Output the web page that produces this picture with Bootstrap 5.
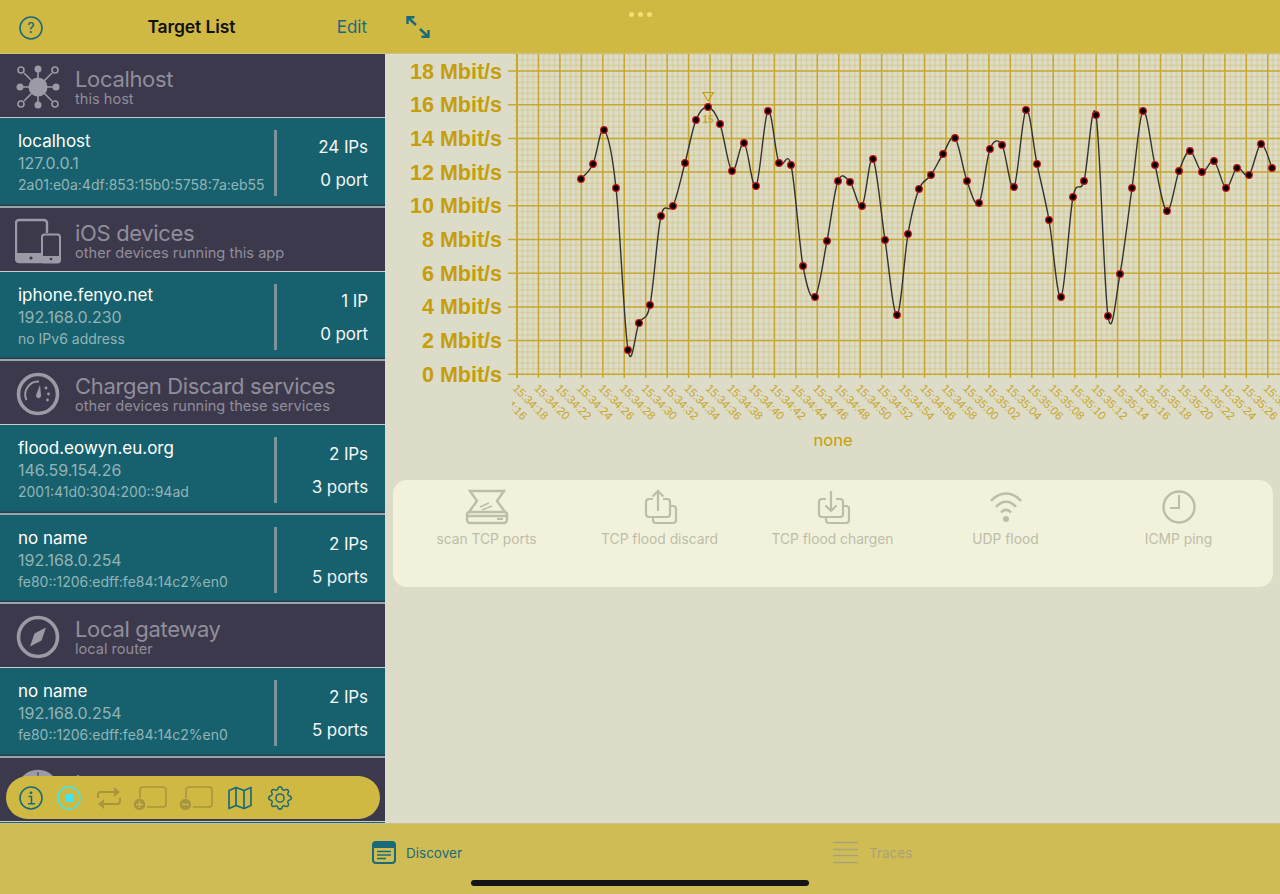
<!DOCTYPE html>
<html lang="en">
<head>
    <meta charset="UTF-8">
    <meta name="viewport" content="width=device-width, initial-scale=1.0">
    <title>Target List</title>
    <link rel="stylesheet" href="https://cdn.jsdelivr.net/npm/bootstrap@5.3.0/dist/css/bootstrap.min.css">
    <style>
        html, body { height: 894px; overflow: hidden; }
        body { font-family: Inter, "Liberation Sans", sans-serif; background: #dcdcc8; }
        svg { display: block; flex: none; }

        .bar-top { height: 54px; background: #cfb943; border-bottom: 1px solid #c9c08a; }
        .side-col { width: 385px; flex: none; }
        .main-col { width: 895px; flex: none; }
        .side-head { padding: 2px 18px 0 19px; }
        .side-title { font-size: 17.5px; font-weight: 600; color: #111; letter-spacing: -.1px; margin-left: 3px; }
        .edit-link { font-size: 17px; color: #1b6a7a; }
        .dots { top: 11.5px; left: 244px; }
        .dots span { width: 5px; height: 5px; border-radius: 50%; background: #f2df70; }

        .target-list { height: 769px; overflow: hidden; background: #3d394d; }
        .sect { height: 64px; background: #3d394d; border-bottom: 1.5px solid #c6cdd0; color: #8f8e9a; padding: 12px 0 0 15px; }
        .sect-icon { width: 46px; height: 46px; margin-top: -2px; margin-right: 14px; }
        .sect-name { font-size: 22px; line-height: 26px; letter-spacing: -.33px; }
        .sect-sub { font-size: 14.6px; line-height: 14px; }

        .host { height: 89.5px; background: #17616e; border-bottom: 2.5px solid #93a6a8; box-shadow: inset 0 -1.5px 0 #2f3b50; padding: 12px 17px 0 18px; }
        .host-left { width: 256px; flex: none; line-height: 22px; }
        .host-name { font-size: 17px; color: #fff; }
        .host-ip { font-size: 16px; color: #93b4b6; }
        .host-six { font-size: 14px; color: #93b4b6; white-space: nowrap; }
        .host-rule { width: 3px; height: 66px; background: #7a959b; flex: none; }
        .host-count { font-size: 17px; line-height: 33px; padding-top: 1px; color: #f2f6f5; text-align: right; letter-spacing: -.1px; }

        .tool-pill { left: 6px; top: 776px; width: 374px; height: 43px; border-radius: 21.5px; background: #cfb943; padding-left: 13px; gap: 10px; }

        .act-panel { margin: 0 7px 0 8px; height: 107px; background: #f2f1dc; border-radius: 14px; padding: 9px 6px 0 7px; }
        .act-item { width: 173px; flex: none; }
        .act-icon { height: 36px; }
        .act-label { font-size: 13.8px; line-height: 16px; margin-top: 6px; color: #bdbea8; }

        .tab-bar { height: 71px; background: #d0bc55; border-top: 1px solid #c9c08a; }
        .tab-label { font-size: 13.5px; line-height: 20px; }
        .tab-on { color: #1b6a7a; }
        .tab-off { color: #a8a27a; }
        .tab-one { left: 372px; top: 17px; gap: 10px; }
        .tab-two { left: 833px; top: 17px; gap: 11px; }
        .home-line { left: 471px; top: 56px; width: 338px; height: 6px; border-radius: 3px; background: #151515; }

        .chart-font { font-family: "Liberation Sans", sans-serif; }
        .none-label { font-family: Inter, sans-serif; }
    </style>
</head>
<body>

<div class="d-flex flex-column position-relative">
    <div class="d-flex">
        <!-- left column -->
        <div class="side-col">
            <div class="bar-top side-head d-flex align-items-center justify-content-between">
                <svg width="24" height="24" viewBox="0 0 24 24">
                    <circle cx="12" cy="12" r="11" fill="none" stroke="#1b6a7a" stroke-width="1.6"/>
                    <text x="12" y="17" text-anchor="middle" font-size="14" font-weight="500" fill="#1b6a7a" font-family="Inter, sans-serif">?</text>
                </svg>
                <span class="side-title">Target List</span>
                <span class="edit-link">Edit</span>
            </div>

            <div class="target-list">
                <div class="sect d-flex">
                    <svg class="sect-icon" viewBox="0 0 46 46" fill="#9b9aa5" stroke="#9b9aa5">
                        <g stroke-width="1.6">
                            <path d="M23 23L23 6M23 23L23 40M23 23L6 23M23 23L40 23M23 23L9 9M23 23L37 9M23 23L9 37M23 23L37 37"/>
                        </g>
                        <circle cx="23" cy="23" r="9.5" stroke="none"/>
                        <circle cx="23" cy="5" r="3.5" stroke="none"/>
                        <circle cx="23" cy="41" r="3.5" stroke="none"/>
                        <circle cx="5" cy="23" r="3.5" stroke="none"/>
                        <circle cx="41" cy="23" r="3.5" stroke="none"/>
                        <g fill="#3d394d" stroke-width="1.6">
                            <circle cx="6" cy="6" r="3"/>
                            <circle cx="40" cy="6" r="3"/>
                            <circle cx="6" cy="40" r="3"/>
                            <circle cx="40" cy="40" r="3"/>
                        </g>
                    </svg>
                    <div>
                        <div class="sect-name">Localhost</div>
                        <div class="sect-sub">this host</div>
                    </div>
                </div>
                <div class="host d-flex">
                    <div class="host-left">
                        <div class="host-name">localhost</div>
                        <div class="host-ip">127.0.0.1</div>
                        <div class="host-six">2a01:e0a:4df:853:15b0:5758:7a:eb55</div>
                    </div>
                    <div class="host-rule"></div>
                    <div class="host-count flex-grow-1"><div>24 IPs</div><div>0 port</div></div>
                </div>

                <div class="sect d-flex">
                    <svg class="sect-icon" viewBox="0 0 46 46">
                        <path d="M30 44H4a3 3 0 0 1-3-3V5a3 3 0 0 1 3-3h25a3 3 0 0 1 3 3v10" fill="none" stroke="#9b9aa5" stroke-width="2.4"/>
                        <path d="M1 35h25v9H4a3 3 0 0 1-3-3z" fill="#9b9aa5"/>
                        <circle cx="16" cy="40" r="1.6" fill="#3d394d"/>
                        <rect x="27" y="16.5" width="18" height="28" rx="2.5" fill="#3d394d" stroke="#9b9aa5" stroke-width="2"/>
                        <rect x="27" y="38" width="18" height="6.5" fill="#9b9aa5"/>
                        <circle cx="36" cy="41" r="1.3" fill="#3d394d"/>
                    </svg>
                    <div>
                        <div class="sect-name">iOS devices</div>
                        <div class="sect-sub">other devices running this app</div>
                    </div>
                </div>
                <div class="host d-flex">
                    <div class="host-left">
                        <div class="host-name">iphone.fenyo.net</div>
                        <div class="host-ip">192.168.0.230</div>
                        <div class="host-six">no IPv6 address</div>
                    </div>
                    <div class="host-rule"></div>
                    <div class="host-count flex-grow-1"><div>1 IP</div><div>0 port</div></div>
                </div>

                <div class="sect d-flex">
                    <svg class="sect-icon" viewBox="0 0 46 46" fill="none" stroke="#9b9aa5">
                        <circle cx="23" cy="23" r="19.5" stroke-width="3.6"/>
                        <path d="M11.5 29A13 13 0 0 1 24 10.5" stroke-width="2"/>
                        <path d="M25 14L26 24.5a2.5 2.5 0 1 1-4.8-.8z" fill="#9b9aa5" stroke="none"/>
                        <g fill="#9b9aa5" stroke="none">
                            <circle cx="31" cy="17" r="1.4"/>
                            <circle cx="33.5" cy="23" r="1.4"/>
                            <circle cx="32.5" cy="29" r="1.4"/>
                        </g>
                    </svg>
                    <div>
                        <div class="sect-name">Chargen Discard services</div>
                        <div class="sect-sub">other devices running these services</div>
                    </div>
                </div>
                <div class="host d-flex">
                    <div class="host-left">
                        <div class="host-name">flood.eowyn.eu.org</div>
                        <div class="host-ip">146.59.154.26</div>
                        <div class="host-six">2001:41d0:304:200::94ad</div>
                    </div>
                    <div class="host-rule"></div>
                    <div class="host-count flex-grow-1"><div>2 IPs</div><div>3 ports</div></div>
                </div>
                <div class="host d-flex">
                    <div class="host-left">
                        <div class="host-name">no name</div>
                        <div class="host-ip">192.168.0.254</div>
                        <div class="host-six">fe80::1206:edff:fe84:14c2%en0</div>
                    </div>
                    <div class="host-rule"></div>
                    <div class="host-count flex-grow-1"><div>2 IPs</div><div>5 ports</div></div>
                </div>

                <div class="sect d-flex">
                    <svg class="sect-icon" viewBox="0 0 46 46" fill="none" stroke="#9b9aa5">
                        <circle cx="23" cy="23" r="19.5" stroke-width="3.6"/>
                        <path d="M31 13.5L26.5 26.5L15 32.5L19.5 19.5z" fill="#9b9aa5" stroke="none"/>
                    </svg>
                    <div>
                        <div class="sect-name">Local gateway</div>
                        <div class="sect-sub">local router</div>
                    </div>
                </div>
                <div class="host d-flex">
                    <div class="host-left">
                        <div class="host-name">no name</div>
                        <div class="host-ip">192.168.0.254</div>
                        <div class="host-six">fe80::1206:edff:fe84:14c2%en0</div>
                    </div>
                    <div class="host-rule"></div>
                    <div class="host-count flex-grow-1"><div>2 IPs</div><div>5 ports</div></div>
                </div>

                <div class="sect d-flex">
                    <svg class="sect-icon" viewBox="0 0 46 46" fill="none" stroke="#9b9aa5">
                        <circle cx="23" cy="23" r="19.5" stroke-width="3.6" fill="#9b9aa5"/>
                        <path d="M23 4V42M4 23H42M8 12H38M8 34H38" stroke="#3d394d" stroke-width="1"/>
                    </svg>
                    <div>
                        <div class="sect-name">Internet</div>
                        <div class="sect-sub">remote hosts</div>
                    </div>
                </div>
                <div class="host"></div>
            </div>
        </div>

        <!-- right column -->
        <div class="main-col">
            <div class="bar-top position-relative">
                <svg class="position-absolute" style="left:20px;top:14px" width="26" height="26" viewBox="0 0 26 26" fill="none" stroke="#1b6a7a" stroke-width="2.4">
                    <path d="M2.5 10V3.3H9.5M3 3.5L11 11"/>
                    <path d="M23.5 16V22.8H16.5M23 22.5L15 15"/>
                </svg>
                <div class="dots position-absolute d-flex gap-1">
                    <span></span><span></span><span></span>
                </div>
            </div>

            <svg id="chart" width="895" height="426" viewBox="385 54 895 426"></svg>

            <div class="act-panel d-flex">
                <div class="act-item text-center">
                    <svg class="act-icon mx-auto" width="44" height="36" viewBox="0 0 44 36" fill="none" stroke="#bdbea8" stroke-width="2.4">
                        <path d="M5 2H39L32 12L40 23H4L12 12z"/>
                        <path d="M4 23a3 3 0 0 0-2 3v5a3 3 0 0 0 3 3H39a3 3 0 0 0 3-3V26a3 3 0 0 0-2-3M2 27H42"/>
                        <path d="M15 18L24 14M17 21L27 17" stroke-width="1.4"/>
                        <path d="M32 30H38" stroke-width="2"/>
                    </svg>
                    <div class="act-label">scan TCP ports</div>
                </div>
                <div class="act-item text-center">
                    <svg class="act-icon mx-auto" width="36" height="36" viewBox="0 0 36 36" fill="none" stroke="#bdbea8" stroke-width="2.2">
                        <path d="M11 10H7a3 3 0 0 0-3 3V25a3 3 0 0 0 3 3H25a3 3 0 0 0 3-3V13a3 3 0 0 0-3-3H21"/>
                        <path d="M29 17h2a3 3 0 0 1 3 3V31a3 3 0 0 1-3 3H14a3 3 0 0 1-3-3V29"/>
                        <path d="M16 22V2M10.5 7.5L16 2L21.5 7.5"/>
                    </svg>
                    <div class="act-label">TCP flood discard</div>
                </div>
                <div class="act-item text-center">
                    <svg class="act-icon mx-auto" width="36" height="36" viewBox="0 0 36 36" fill="none" stroke="#bdbea8" stroke-width="2.2">
                        <path d="M11 10H7a3 3 0 0 0-3 3V25a3 3 0 0 0 3 3H25a3 3 0 0 0 3-3V13a3 3 0 0 0-3-3H21"/>
                        <path d="M29 17h2a3 3 0 0 1 3 3V31a3 3 0 0 1-3 3H14a3 3 0 0 1-3-3V29"/>
                        <path d="M16 2V22M10.5 16.5L16 22L21.5 16.5"/>
                    </svg>
                    <div class="act-label">TCP flood chargen</div>
                </div>
                <div class="act-item text-center">
                    <svg class="act-icon mx-auto" width="36" height="36" viewBox="0 0 36 36" fill="none" stroke="#bdbea8" stroke-width="2.6">
                        <path d="M3 12C12 2 24 2 33 12M8 18C14 11 22 11 28 18M13 23.5C16 20 20 20 23 23.5"/>
                        <circle cx="18" cy="30" r="3" fill="#bdbea8" stroke="none"/>
                    </svg>
                    <div class="act-label">UDP flood</div>
                </div>
                <div class="act-item text-center">
                    <svg class="act-icon mx-auto" width="36" height="36" viewBox="0 0 36 36" fill="none" stroke="#bdbea8" stroke-width="2.4">
                        <circle cx="18" cy="18" r="15.5"/>
                        <path d="M18 6V19H9" stroke-width="2"/>
                    </svg>
                    <div class="act-label">ICMP ping</div>
                </div>
            </div>
        </div>
    </div>

    <!-- floating toolbar -->
    <div class="tool-pill position-absolute d-flex align-items-center">
        <svg width="24" height="24" viewBox="0 0 24 24">
            <circle cx="12" cy="12" r="11" fill="none" stroke="#1b6a7a" stroke-width="1.6"/>
            <circle cx="12" cy="6.8" r="1.4" fill="#1b6a7a"/>
            <path d="M9.5 10.5H12.5V17.5M9 17.7H16" fill="none" stroke="#1b6a7a" stroke-width="1.5"/>
        </svg>
        <svg width="32" height="24" viewBox="0 0 32 24">
            <circle cx="16" cy="12" r="11" fill="none" stroke="#3ce8f5" stroke-width="1.4"/>
            <rect x="12" y="8" width="8" height="8" fill="#3ce8f5"/>
        </svg>
        <svg width="28" height="24" viewBox="0 0 28 24" fill="none" stroke="#a8963f" stroke-width="2">
            <path d="M3 12V9a3 3 0 0 1 3-3H20"/>
            <path d="M19 1L25 6L19 11z" fill="#a8963f" stroke="none"/>
            <path d="M25 12V15a3 3 0 0 1-3 3H8"/>
            <path d="M9 13L3 18L9 23z" fill="#a8963f" stroke="none"/>
        </svg>
        <svg width="36" height="26" viewBox="0 0 36 26" fill="none" stroke="#a8963f" stroke-width="1.6">
            <path d="M7 13V5a3 3 0 0 1 3-3H30a3 3 0 0 1 3 3V19a3 3 0 0 1-3 3H14"/>
            <circle cx="6.5" cy="19.5" r="5.7" fill="#a8963f" stroke="none"/>
            <path d="M3 19.5H10M6.5 16V23" stroke="#cfb943" stroke-width="1.4"/>
        </svg>
        <svg width="36" height="26" viewBox="0 0 36 26" fill="none" stroke="#a8963f" stroke-width="1.6">
            <path d="M7 13V5a3 3 0 0 1 3-3H30a3 3 0 0 1 3 3V19a3 3 0 0 1-3 3H14"/>
            <circle cx="6.5" cy="19.5" r="5.7" fill="#a8963f" stroke="none"/>
            <path d="M3 19.5H10" stroke="#cfb943" stroke-width="1.4"/>
        </svg>
        <svg width="30" height="24" viewBox="0 0 30 24" fill="none" stroke="#1b6a7a" stroke-width="1.7" stroke-linejoin="round">
            <path d="M4 4.5L11 1.5L19 4.5L26 1.5V19.5L19 22.5L11 19.5L4 22.5z"/>
            <path d="M11 1.5V19.5M19 4.5V22.5"/>
        </svg>
        <svg width="30" height="24" viewBox="0 0 16 16" fill="#1b6a7a" preserveAspectRatio="xMidYMid meet">
            <path d="M8 4.754a3.246 3.246 0 1 0 0 6.492 3.246 3.246 0 0 0 0-6.492zM5.754 8a2.246 2.246 0 1 1 4.492 0 2.246 2.246 0 0 1-4.492 0z"/>
            <path d="M9.796 1.343c-.527-1.79-3.065-1.79-3.592 0l-.094.319a.873.873 0 0 1-1.255.52l-.292-.16c-1.64-.892-3.433.902-2.54 2.541l.159.292a.873.873 0 0 1-.52 1.255l-.319.094c-1.79.527-1.79 3.065 0 3.592l.319.094a.873.873 0 0 1 .52 1.255l-.16.292c-.892 1.64.901 3.434 2.541 2.54l.292-.159a.873.873 0 0 1 1.255.52l.094.319c.527 1.79 3.065 1.79 3.592 0l.094-.319a.873.873 0 0 1 1.255-.52l.292.16c1.64.893 3.434-.902 2.54-2.541l-.159-.292a.873.873 0 0 1 .52-1.255l.319-.094c1.79-.527 1.79-3.065 0-3.592l-.319-.094a.873.873 0 0 1-.52-1.255l.16-.292c.893-1.64-.902-3.433-2.541-2.54l-.292.159a.873.873 0 0 1-1.255-.52l-.094-.319zm-2.633.283c.246-.835 1.428-.835 1.674 0l.094.319a1.873 1.873 0 0 0 2.693 1.115l.291-.16c.764-.415 1.6.42 1.184 1.185l-.159.292a1.873 1.873 0 0 0 1.116 2.692l.318.094c.835.246.835 1.428 0 1.674l-.319.094a1.873 1.873 0 0 0-1.115 2.693l.16.291c.415.764-.42 1.6-1.185 1.184l-.291-.159a1.873 1.873 0 0 0-2.693 1.116l-.094.318c-.246.835-1.428.835-1.674 0l-.094-.319a1.873 1.873 0 0 0-2.692-1.115l-.292.16c-.764.415-1.6-.42-1.184-1.185l.159-.291A1.873 1.873 0 0 0 1.945 8.93l-.319-.094c-.835-.246-.835-1.428 0-1.674l.319-.094A1.873 1.873 0 0 0 3.06 4.377l-.16-.292c-.415-.764.42-1.6 1.185-1.184l.292.159a1.873 1.873 0 0 0 2.692-1.115l.094-.319z"/>
        </svg>
    </div>

    <!-- tab bar -->
    <div class="tab-bar position-relative">
        <div class="tab-one position-absolute d-flex align-items-center">
            <svg width="24" height="23" viewBox="0 0 24 23">
                <rect x="1" y="1" width="22" height="21" rx="3" fill="none" stroke="#1b6a7a" stroke-width="2"/>
                <path d="M1 4a3 3 0 0 1 3-3H20a3 3 0 0 1 3 3V7H1z" fill="#1b6a7a"/>
                <path d="M5 10.5H19M5 14H19M5 17.5H14" stroke="#1b6a7a" stroke-width="1.5"/>
            </svg>
            <span class="tab-label tab-on">Discover</span>
        </div>
        <div class="tab-two position-absolute d-flex align-items-center">
            <svg width="25" height="23" viewBox="0 0 25 23" stroke="#a8a27a" stroke-width="1.6">
                <path d="M0 1.5H25M0 8.5H25M0 14.5H25M0 21.5H25"/>
            </svg>
            <span class="tab-label tab-off">Traces</span>
        </div>
        <div class="home-line position-absolute"></div>
    </div>
</div>

<script>
// points of the throughput graph, in page pixels
const points = [
    [581,179],[593,164],[604,130],[616,188],[628,350],[639,323],[650,305],[661,216],[673,206],[685,163],
    [696,120],[708,107],[720,124],[732,171],[744,143],[756,186],[768,111],[779,163],[791,165],[803,266],
    [815,297],[827,241],[838,181],[850,182],[862,206],[873,159],[885,240],[897,315],[908,234],[919,189],
    [931,175],[943,154],[955,138],[967,181],[979,203],[990,149],[1002,145],[1014,187],[1026,110],[1037,164],
    [1049,220],[1061,297],[1073,197],[1084,181],[1096,115],[1108,316],[1120,274],[1132,188],[1143,111],[1155,165],
    [1167,211],[1179,171],[1190,151],[1202,172],[1214,161],[1226,188],[1237,168],[1249,175],[1261,144],[1272,168]
];

const gold = "#c9a830";
const textGold = "#c59e0a";
const labelGold = "#c9a52a";
const stepX = 21.45, baseX = 517, stepY = 33.7, baseY = 374.3;
let svg = "";

svg += `<defs><clipPath id="labelClip"><rect x="512" y="376" width="768" height="50"/></clipPath></defs>`;

// minor grid
for (let x = baseX; x < 1285; x += stepX / 4) {
    svg += `<line x1="${x}" y1="54" x2="${x}" y2="376" stroke="${gold}" stroke-opacity=".2" stroke-width="1.6"/>`;
}
for (let k = 0; baseY - k * stepY / 6 > 54; k++) {
    let y = baseY - k * stepY / 6;
    svg += `<line x1="514" y1="${y}" x2="1280" y2="${y}" stroke="${gold}" stroke-opacity=".2" stroke-width="1.6"/>`;
}

// major grid and y axis labels
for (let k = 0; baseX + k * stepX < 1285; k++) {
    let x = baseX + k * stepX;
    svg += `<line x1="${x}" y1="54" x2="${x}" y2="378" stroke="${gold}" stroke-width="${k == 0 ? 2 : 1.5}"/>`;
}
for (let k = 0; k <= 9; k++) {
    let y = baseY - k * stepY;
    svg += `<line x1="508" y1="${y}" x2="1280" y2="${y}" stroke="${gold}" stroke-width="1.5"/>`;
    svg += `<text class="chart-font" x="502" y="${y + 7.5}" text-anchor="end" font-size="21.5" font-weight="700" fill="${textGold}">${k * 2} Mbit/s</text>`;
}

// time labels, every 2 seconds from 15:34:16
svg += `<g clip-path="url(#labelClip)">`;
for (let k = 0; k < 37; k++) {
    let secs = 34 * 60 + 16 + k * 2;
    let mm = String(Math.floor(secs / 60)).padStart(2, "0");
    let ss = String(secs % 60).padStart(2, "0");
    let x = 490.5 + k * stepX, y = 389;
    svg += `<text class="chart-font" x="${x}" y="${y}" transform="rotate(45 ${x} ${y})" font-size="11.5" fill="${labelGold}">15:${mm}:${ss}</text>`;
}
svg += `</g>`;

svg += `<text class="none-label" x="833" y="445.5" text-anchor="middle" font-size="16.5" fill="${textGold}">none</text>`;

// max marker
svg += `<path d="M703 92.5H713.5L708.2 101z" fill="none" stroke="${textGold}" stroke-width="1.1"/>`;
svg += `<text class="chart-font" x="708" y="123" text-anchor="middle" font-size="10" font-weight="700" fill="${gold}">15</text>`;

// catmull-rom curve through the points
let d = `M${points[0][0]} ${points[0][1]}`;
for (let i = 0; i < points.length - 1; i++) {
    let p0 = points[Math.max(i - 1, 0)], p1 = points[i], p2 = points[i + 1], p3 = points[Math.min(i + 2, points.length - 1)];
    let c1x = p1[0] + (p2[0] - p0[0]) / 6, c1y = p1[1] + (p2[1] - p0[1]) / 6;
    let c2x = p2[0] - (p3[0] - p1[0]) / 6, c2y = p2[1] - (p3[1] - p1[1]) / 6;
    d += `C${c1x} ${c1y} ${c2x} ${c2y} ${p2[0]} ${p2[1]}`;
}
svg += `<path d="${d}" fill="none" stroke="#333" stroke-width="1.4"/>`;

points.forEach(p => {
    svg += `<circle cx="${p[0]}" cy="${p[1]}" r="3.3" fill="#000" stroke="#c4121a" stroke-width="1.2"/>`;
});

document.getElementById("chart").innerHTML = svg;
</script>
<script src="https://cdn.jsdelivr.net/npm/bootstrap@5.3.0/dist/js/bootstrap.bundle.min.js"></script>
</body>
</html>
